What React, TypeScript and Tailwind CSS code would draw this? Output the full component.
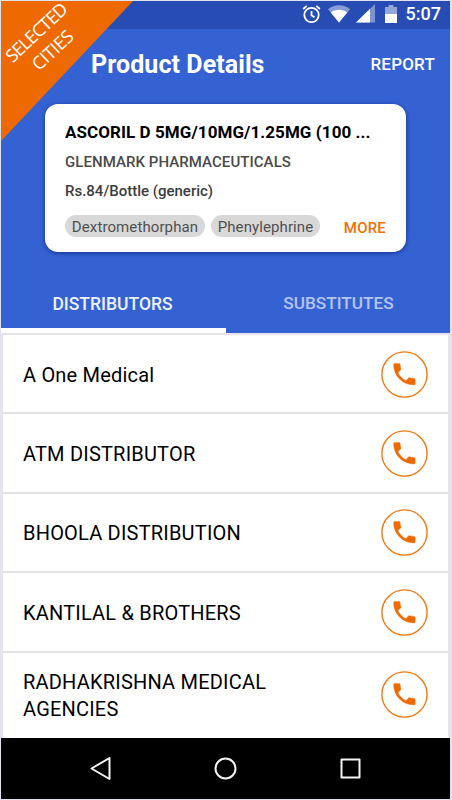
import { clsx } from "clsx";

interface Distributor {
  name: string;
  height: string;
}

const distributors: Distributor[] = [
  { name: "A One Medical", height: "h-[79.4px]" },
  { name: "ATM DISTRIBUTOR", height: "h-[79.4px]" },
  { name: "BHOOLA DISTRIBUTION", height: "h-[79.4px]" },
  { name: "KANTILAL & BROTHERS", height: "h-[79.4px]" },
  { name: "RADHAKRISHNA MEDICAL AGENCIES", height: "h-[83px]" },
];

function StatusBar() {
  return (
    <div className="flex h-7 items-center justify-end bg-[#274cb4] pr-[9px] text-white">
      <svg className="mr-[7px] mb-0.5 h-5 w-5" viewBox="0 0 20 20" fill="none" stroke="currentColor" strokeWidth="1.8">
        <circle cx="10.5" cy="11" r="7.2" />
        <path d="M10.5 7v4.3l3 2M2.1 5l3.7-3.1M18.9 5l-3.7-3.1" strokeWidth="1.8" />
      </svg>
      <svg className="mr-[6px] mb-[3px] h-[18px] w-[22px]" viewBox="0 0 22 18" fill="currentColor">
        <path d="M0 4.2C6-1 16-1 22 4.2L11 17.5z" opacity=".45" />
        <path d="M2.8 7.5C7.5 3.7 14.5 3.7 19.2 7.5L11 17.5z" />
      </svg>
      <svg className="mr-[10px] mb-[3px] h-[19px] w-[19px]" viewBox="0 0 19 19" fill="currentColor">
        <path d="M0 18.5L19 0v18.5z" opacity=".4" />
        <path d="M0 18.5L14 4.8v13.7z" />
      </svg>
      <svg className="mr-[9px] mb-[3px] h-[18px] w-3" viewBox="0 0 12 18" fill="currentColor">
        <path d="M0 2h3.5V0h5v2H12v7H0z" opacity=".5" />
        <path d="M0 9h12v9H0z" />
      </svg>
      <span className="pb-0.5 text-[18px] leading-none font-medium">5:07</span>
    </div>
  );
}

function ProductCard() {
  return (
    <div className="mx-auto mt-[3px] h-[148px] w-[361px] rounded-[13px] bg-white px-5 pt-[17px] shadow-[0_1px_4px_rgba(0,20,100,0.65)]">
      <h2 className="truncate text-[17px] leading-[22px] font-bold tracking-[0.07px] text-black">
        ASCORIL D 5MG/10MG/1.25MG (100 ...
      </h2>
      <p className="mt-[9px] text-[15px] leading-5 font-medium tracking-[0.06px] text-[#4a4a4a]">GLENMARK PHARMACEUTICALS</p>
      <p className="mt-[9px] text-[15px] leading-5 font-medium text-[#3c3c3c]">Rs.84/Bottle (generic)</p>
      <div className="mt-[11px] flex items-center whitespace-nowrap text-[15px] text-[#505050]">
        <span className="flex h-[22px] w-[140px] items-center justify-center rounded-full bg-[#d8d8d8] pt-[3px] tracking-[0.1px]">
          Dextromethorphan
        </span>
        <span className="ml-1.5 flex h-[22px] w-[109px] items-center justify-center rounded-full bg-[#d8d8d8] pt-[3px] tracking-[0.1px]">
          Phenylephrine
        </span>
        <button type="button" className="ml-auto pt-[5px] font-medium tracking-[0.2px] text-[#f07000]">
          MORE
        </button>
      </div>
    </div>
  );
}

function Tabs() {
  const tabs = ["DISTRIBUTORS", "SUBSTITUTES"];
  return (
    <div className="mt-[22px] flex h-[59px]">
      {tabs.map((tab, idx) => (
        <button
          key={tab}
          type="button"
          className={clsx(
            "flex-1 border-b-[5px] pt-1.5 font-medium",
            idx === 0
              ? "border-white pr-0.5 text-[17.5px] text-[#eef2fc]"
              : "border-transparent pl-px text-[17.2px] text-[#b5c5ef]"
          )}
        >
          {tab}
        </button>
      ))}
    </div>
  );
}

function DistributorRow({ name, height }: Distributor) {
  return (
    <li className={clsx("flex shrink-0 items-center border-b-2 border-[#e2e2e5] pr-5 pl-5 last:border-b-0", height)}>
      <span className="w-[290px] pt-[3px] text-[20px] leading-[27px] tracking-[0.2px] text-black">{name}</span>
      <button type="button" className="mt-px ml-auto text-[#ee6a00]">
        <svg className="block size-[47px]" viewBox="0 0 47 47" fill="none" stroke="currentColor">
          <circle cx="23.5" cy="23.5" r="22.6" stroke="#f07a14" strokeWidth="1.4" />
          <path
            d="M6.62 10.79c1.44 2.83 3.76 5.14 6.59 6.59l2.2-2.2c.27-.27.67-.36 1.02-.24 1.12.37 2.33.57 3.57.57.55 0 1 .45 1 1V20c0 .55-.45 1-1 1-9.39 0-17-7.61-17-17 0-.55.45-1 1-1h3.5c.55 0 1 .45 1 1 0 1.25.2 2.45.57 3.57.11.35.03.74-.25 1.02l-2.2 2.2z"
            transform="translate(9 8.8) scale(1.2)"
            fill="currentColor"
            strokeWidth="0.3"
          />
        </svg>
      </button>
    </li>
  );
}

function NavBar() {
  return (
    <div className="flex h-[61px] items-center bg-black pl-[89px]">
      <svg className="h-6 w-[272px]" viewBox="0 0 272 24" fill="none" stroke="#f4f4f4" strokeWidth="2" strokeLinejoin="round">
        <path d="M1.5 11.5L19.5 1v21z" />
        <circle cx="135.5" cy="11.5" r="10" />
        <path d="M251.5 2.5h18v18h-18z" />
      </svg>
    </div>
  );
}

function Ribbon() {
  return (
    <div className="absolute top-0 left-0 h-[140px] w-[132px] bg-[#ee6a00] [clip-path:polygon(0_0,100%_0,0_100%)]">
      <div className="absolute top-[16px] left-[-17px] w-[120px] -rotate-[43deg] text-center font-['Open_Sans',sans-serif] text-[18px] leading-[24px] tracking-[-0.9px] text-white">
        <p>SELECTED</p>
        <p className="tracking-[-0.4px]">CITIES</p>
      </div>
    </div>
  );
}

export default function App() {
  return (
    <div className="h-[800px] w-[452px] overflow-hidden border border-r-2 border-[#dfe3ee] bg-white font-['Roboto',sans-serif]">
      <div className="relative flex h-[798px] flex-col">
        <header className="h-[332px] shrink-0 bg-[#3562d3]">
          <StatusBar />
          <div className="flex h-[72px] items-center justify-between pr-[15px] pl-[90px] text-white">
            <h1 className="text-[25px] font-bold tracking-[0.07px]">Product Details</h1>
            <button type="button" className="text-[17px] font-medium tracking-[0.2px]">REPORT</button>
          </div>
          <ProductCard />
          <Tabs />
        </header>
        <ul className="flex h-[405px] shrink-0 flex-col border-2 border-b-0 border-[#e4e4ea]">
          {distributors.map((item) => (
            <DistributorRow key={item.name} {...item} />
          ))}
        </ul>
        <NavBar />
        <Ribbon />
      </div>
    </div>
  );
}
